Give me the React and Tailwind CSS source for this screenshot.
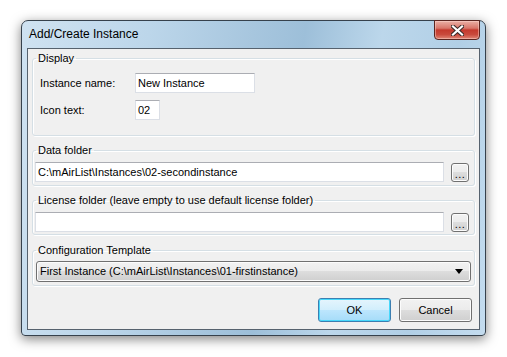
import React from 'react';

// Windows 7 style "Add/Create Instance" dialog

const Group = ({ label, className, children }) => (
  <fieldset className="rounded-[3px] border border-[#d5dfe5] shadow-[inset_1px_1px_0_#ffffff,1px_1px_0_#ffffff]">
    <legend className="ml-[3px] px-[2px] leading-[14px]">{label}</legend>
    <div className={className}>{children}</div>
  </fieldset>
);

const TextBox = ({ value, className }) => (
  <div className={'h-[20px] flex items-center pl-[2px] bg-white border border-[#dbdfe6] border-t-[#abadb3] whitespace-nowrap overflow-hidden ' + className}>
    {value}
  </div>
);

const Ellipsis = () => (
  <button className="w-[18px] h-[19px] rounded-[3px] border border-[#707070] bg-[linear-gradient(#f2f2f2,#ebebeb_50%,#dddddd_50%,#cfcfcf)] shadow-[inset_0_0_0_1px_#fcfcfc] flex items-end justify-center pb-[3px] leading-[8px] text-[11px] tracking-[0.5px]">
    ...
  </button>
);

export default function App() {
  return (
    <div className="w-[507px] h-[357px] bg-white pt-[20px] pl-[21px] font-['Liberation_Sans',Arial,sans-serif] text-[11px] text-black">
      <div className="w-[465px] h-[316px] rounded-t-[7px] rounded-b-[4px] border border-[#36414c] bg-[linear-gradient(100deg,#cfe2f1_0%,#bcd6ea_25%,#a7c6de_45%,#9dbfd9_55%,#bcd7eb_70%,#b1cfe6_85%,#c4dcef_100%)] shadow-[0_3px_12px_rgba(0,0,0,0.5)] flex flex-col px-[5px] pb-[5px]">
        {/* title bar */}
        <div className="h-[27px] flex items-start justify-between">
          <span className="mt-[6px] ml-[2px] text-[12px] leading-[15px] text-black">Add/Create Instance</span>
          <button className="-mt-px w-[46px] h-[20px] rounded-b-[4px] border border-[#5a2520] bg-[linear-gradient(#eab0a6,#d8766a_40%,#c4392d_50%,#c94a3c_75%,#e08676)] shadow-[inset_0_0_0_1px_rgba(255,220,210,0.45)] flex items-center justify-center">
            <svg width="13" height="11" viewBox="0 0 13 11">
              <path d="M2 1.5 L11 9.5 M11 1.5 L2 9.5" stroke="#3a2a28" strokeWidth="4.2" strokeLinecap="square" fill="none" />
              <path d="M2 1.5 L11 9.5 M11 1.5 L2 9.5" stroke="#ffffff" strokeWidth="2.2" strokeLinecap="square" fill="none" />
            </svg>
          </button>
        </div>

        {/* client area */}
        <div className="flex-1 border border-[#56626e] bg-[#f0f0f0] px-[4px] pt-[2px] flex flex-col gap-[7px]">
          <Group label="Display" className="pl-[7px] pt-[8px] pb-[15px]">
            <div className="flex items-center h-[20px]">
              <span className="w-[95px]">Instance name:</span>
              <TextBox value="New Instance" className="w-[120px]" />
            </div>
            <div className="flex items-center h-[20px] mt-[7px]">
              <span className="w-[95px]">Icon text:</span>
              <TextBox value="02" className="w-[25px]" />
            </div>
          </Group>

          <Group label="Data folder" className="pl-[2px] pt-[5px] pb-[3px] flex items-center gap-[7px]">
            <TextBox value="C:\mAirList\Instances\02-secondinstance" className="w-[409px]" />
            <Ellipsis />
          </Group>

          <Group label="License folder (leave empty to use default license folder)" className="pl-[2px] pt-[5px] pb-[2px] flex items-center gap-[7px]">
            <TextBox value="" className="w-[409px]" />
            <Ellipsis />
          </Group>

          <div className="mt-px">
            <Group label="Configuration Template" className="pl-[3px] pt-[4px] pb-[3px]">
              <div className="w-[435px] h-[21px] rounded-[3px] border border-[#707070] bg-[linear-gradient(#f2f2f2,#ebebeb_50%,#dddddd_50%,#cfcfcf)] shadow-[inset_0_0_0_1px_#fcfcfc] flex items-center justify-between pl-[3px] pr-[7px]">
                <span>First Instance (C:\mAirList\Instances\01-firstinstance)</span>
                <svg width="8" height="5" viewBox="0 0 8 5">
                  <path d="M0 0 H8 L4 5 Z" fill="#000" />
                </svg>
              </div>
            </Group>
          </div>

          <div className="mt-[5px] flex justify-end gap-[8px] pr-[3px]">
            <button className="w-[73px] h-[24px] rounded-[3px] border border-[#3c7fb1] bg-[linear-gradient(#e5f5fd,#d1eefc_50%,#bde6fd_50%,#a5dcf9)] shadow-[inset_0_0_0_1px_#48d8fb] text-[11px]">
              OK
            </button>
            <button className="w-[73px] h-[24px] rounded-[3px] border border-[#707070] bg-[linear-gradient(#f2f2f2,#ebebeb_50%,#dddddd_50%,#cfcfcf)] shadow-[inset_0_0_0_1px_#fcfcfc] text-[11px]">
              Cancel
            </button>
          </div>
        </div>
      </div>
    </div>
  );
}
